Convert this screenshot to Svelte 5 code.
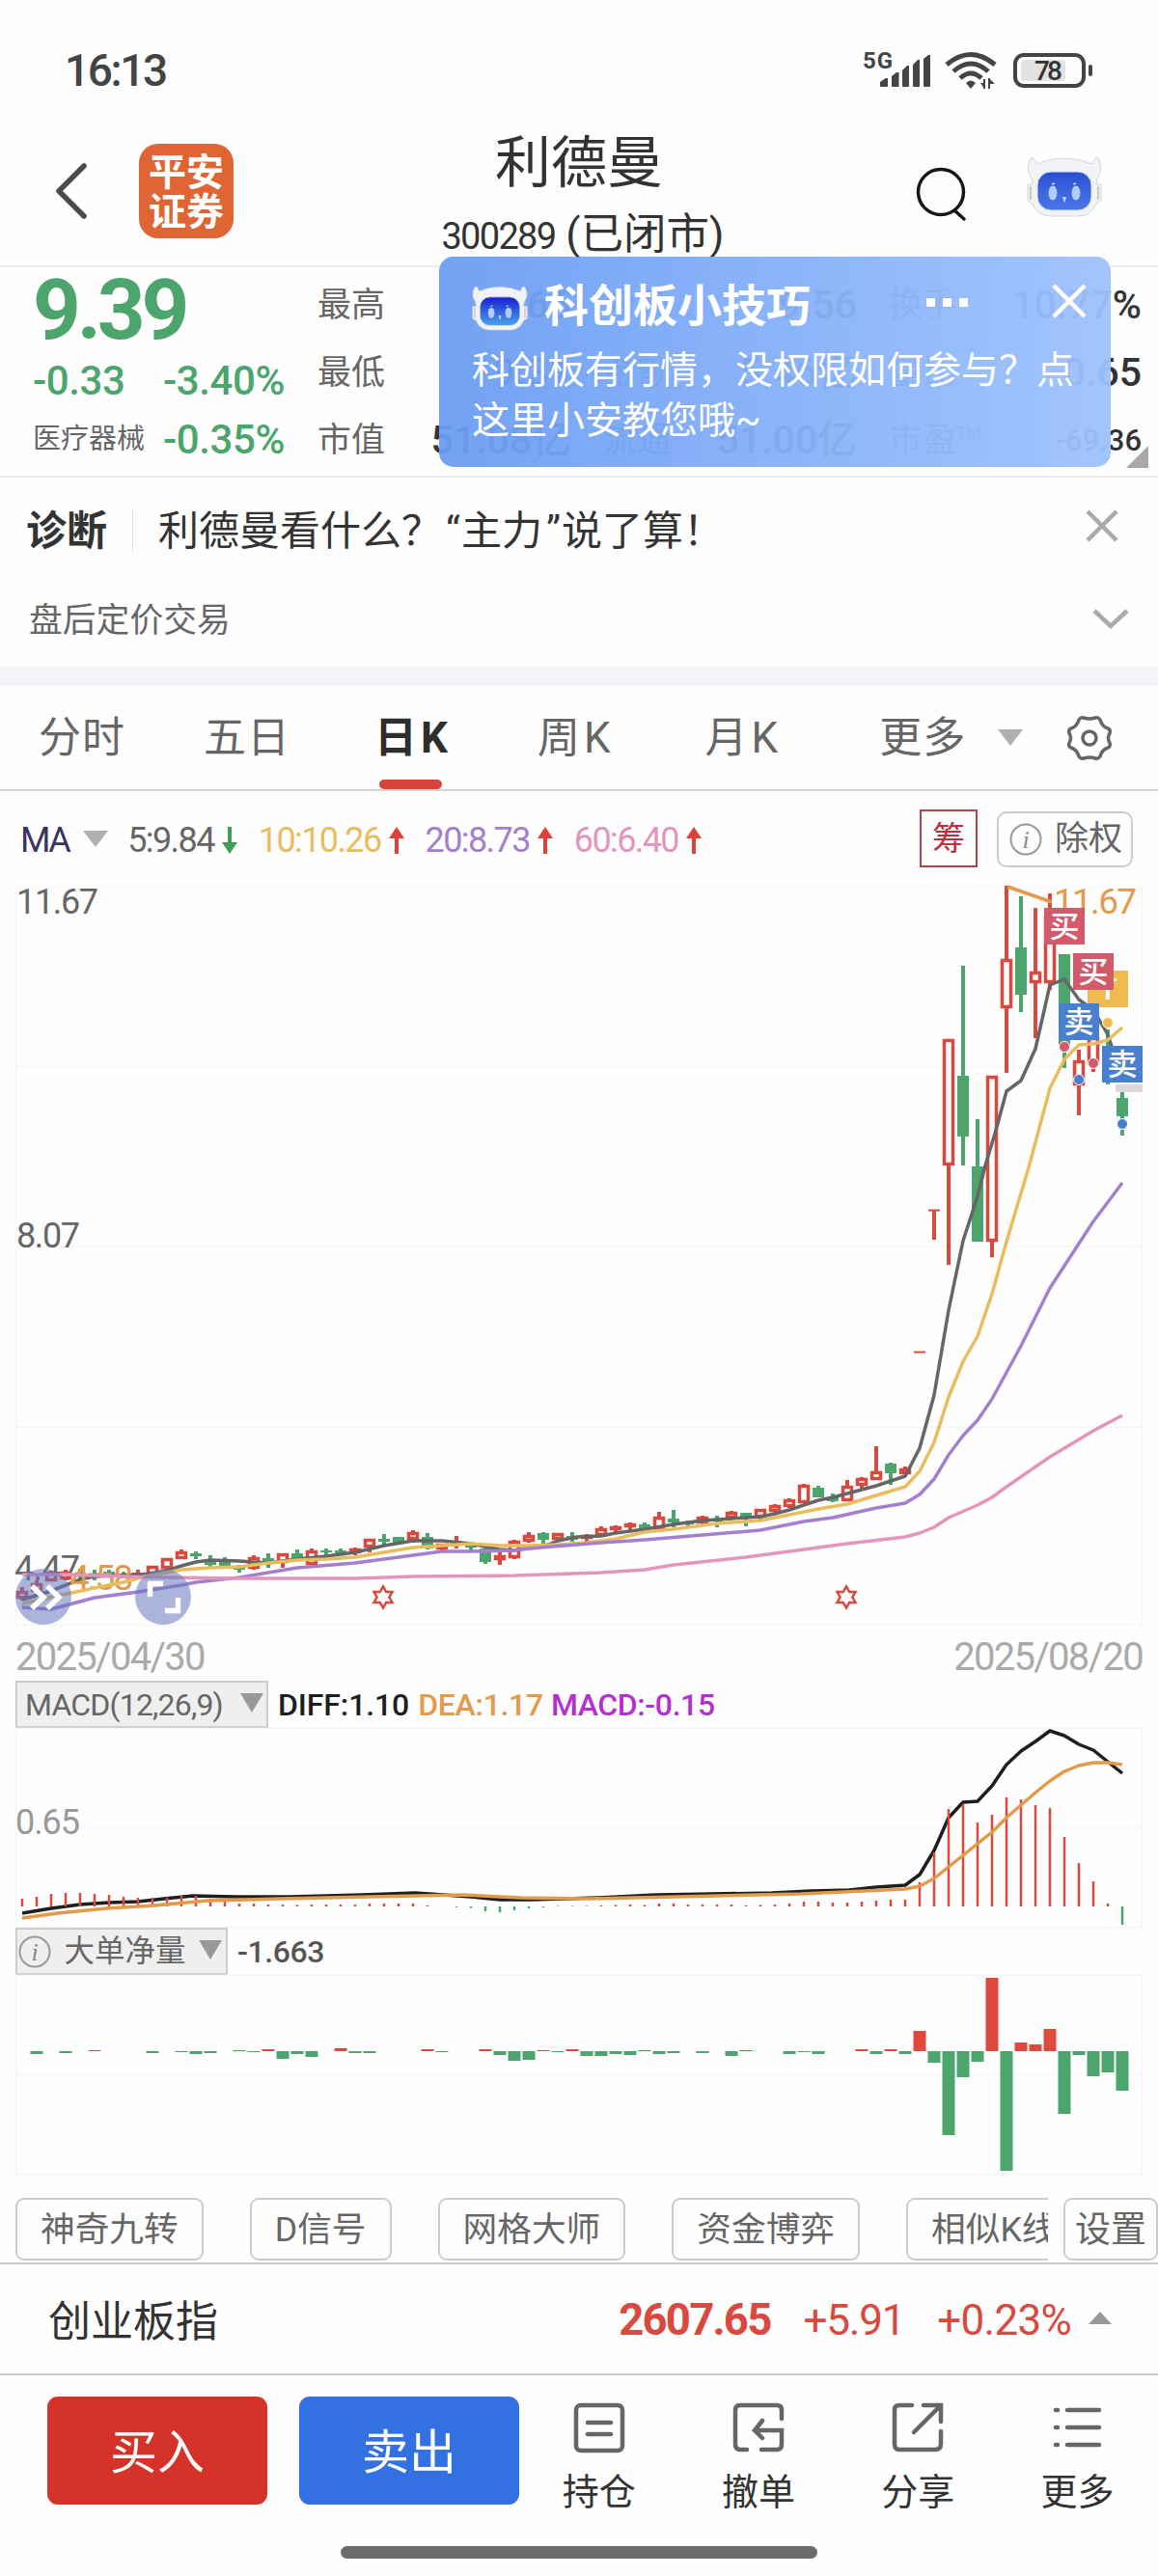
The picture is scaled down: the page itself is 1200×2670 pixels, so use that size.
<script lang="ts">
  type Candle = [kind: "r" | "g", top: number, bottom: number, high: number, low: number];

  const quotes = [
    ["最高", "9.66", "今开", "9.56", "换手", "10.77%"],
    ["最低", "9.31", "金额", "5.46亿", "量比", "0.65"],
    ["市值", "51.08亿", "流通", "51.00亿", "市盈", "-69.36"],
  ];
  const tabs = ["分时", "五日", "日K", "周K", "月K", "更多"];
  const averages = [
    { label: "5:9.84", tone: "ma5", up: false },
    { label: "10:10.26", tone: "ma10", up: true },
    { label: "20:8.73", tone: "ma20", up: true },
    { label: "60:6.40", tone: "ma60", up: true },
  ];
  const tools = ["神奇九转", "D信号", "网格大师", "资金博弈", "相似K线"];

  const step = 15;
  const x = (i: number) => 23 + i * step;

  // kind, body top, body bottom, wick high, wick low
  const candles: Candle[] = [
    ["r", 1649, 1657, 1645, 1659], ["r", 1641, 1650, 1638, 1650], ["r", 1630, 1639, 1628, 1639],
    ["r", 1629, 1637, 1627, 1638], ["g", 1630, 1632, 1626, 1637], ["g", 1631, 1632, 1627, 1638],
    ["g", 1629, 1632, 1627, 1635], ["g", 1631, 1633, 1629, 1636], ["r", 1630, 1632, 1627, 1635],
    ["r", 1623, 1632, 1623, 1634], ["r", 1615, 1626, 1615, 1628], ["r", 1608, 1616, 1606, 1616],
    ["g", 1610, 1613, 1608, 1616], ["g", 1616, 1622, 1612, 1624], ["g", 1619, 1623, 1614, 1626],
    ["g", 1625, 1627, 1622, 1630], ["r", 1614, 1626, 1612, 1627], ["g", 1615, 1620, 1610, 1625],
    ["r", 1610, 1620, 1610, 1625], ["g", 1610, 1615, 1606, 1615], ["r", 1607, 1622, 1605, 1623],
    ["g", 1607, 1609, 1605, 1612], ["g", 1607, 1611, 1605, 1612], ["r", 1605, 1610, 1604, 1612],
    ["r", 1595, 1604, 1595, 1609], ["g", 1595, 1598, 1590, 1602], ["g", 1593, 1599, 1593, 1599],
    ["r", 1588, 1596, 1586, 1599], ["g", 1593, 1605, 1589, 1606], ["r", 1600, 1606, 1600, 1607],
    ["r", 1597, 1599, 1592, 1605], ["g", 1602, 1604, 1600, 1607], ["g", 1605, 1619, 1603, 1621],
    ["r", 1612, 1617, 1609, 1622], ["r", 1597, 1615, 1596, 1616], ["r", 1591, 1598, 1588, 1599],
    ["g", 1589, 1596, 1588, 1600], ["r", 1589, 1596, 1589, 1597], ["g", 1592, 1596, 1588, 1598],
    ["r", 1591, 1594, 1590, 1598], ["r", 1584, 1592, 1582, 1592], ["r", 1582, 1586, 1581, 1588],
    ["r", 1579, 1583, 1578, 1586], ["g", 1580, 1586, 1578, 1588], ["r", 1572, 1587, 1567, 1587],
    ["g", 1574, 1578, 1565, 1583], ["g", 1578, 1580, 1576, 1583], ["r", 1572, 1579, 1571, 1580],
    ["g", 1575, 1577, 1571, 1583], ["r", 1567, 1574, 1566, 1575], ["g", 1568, 1574, 1568, 1582],
    ["r", 1564, 1573, 1564, 1577], ["r", 1560, 1567, 1559, 1568], ["r", 1554, 1562, 1553, 1563],
    ["r", 1539, 1558, 1538, 1558], ["g", 1542, 1552, 1540, 1552], ["g", 1552, 1556, 1548, 1557],
    ["r", 1540, 1556, 1534, 1556], ["r", 1532, 1540, 1531, 1543], ["r", 1525, 1534, 1499, 1534],
    ["g", 1517, 1527, 1516, 1539], ["r", 1522, 1528, 1520, 1528], ["r", 1401, 1402, 1401, 1402],
    ["r", 1254, 1255, 1254, 1285], ["r", 1077, 1208, 1077, 1311], ["g", 1115, 1178, 1001, 1208],
    ["g", 1209, 1287, 1160, 1287], ["r", 1115, 1287, 1115, 1303], ["r", 994, 1045, 918, 1112],
    ["g", 982, 1031, 929, 1049], ["r", 1007, 1019, 941, 1076], ["r", 950, 1019, 926, 1026],
    ["g", 989, 1083, 989, 1107], ["r", 1099, 1125, 1088, 1156], ["r", 1075, 1103, 1070, 1111],
    ["g", 1090, 1122, 1067, 1124], ["g", 1138, 1157, 1132, 1177],
  ];

  const ma5 = "23,1658 50,1650 68,1643 83,1637 98,1634 143,1632 158,1631 173,1628 188,1623 203,1619 218,1617 248,1618 278,1620 308,1616 338,1613 368,1609 398,1602 428,1597 458,1597 488,1600 503,1603 518,1606 533,1607 548,1604 568,1601 578,1597 598,1593 623,1592 638,1589 668,1585 698,1580 728,1576 758,1574 788,1572 803,1569 818,1565 833,1560 848,1555 863,1552 878,1548 893,1544 908,1540 923,1535 938,1530 953,1501 968,1446 983,1358 998,1286 1013,1240 1021,1208 1031,1175 1043,1131 1058,1120 1073,1087 1088,1021 1103,1015 1118,1036 1133,1047 1148,1072 1163,1120";
  const ma10 = "23,1662 60,1654 98,1646 128,1640 150,1634 188,1627 218,1625 248,1624 278,1620 308,1617 338,1616 368,1614 398,1609 428,1604 458,1602 488,1600 518,1602 548,1602 578,1601 608,1599 638,1595 668,1588 698,1585 743,1579 788,1576 818,1570 848,1564 878,1559 908,1550 938,1541 953,1525 968,1495 983,1448 998,1411 1013,1385 1028,1341 1043,1287 1066,1210 1088,1128 1103,1098 1118,1083 1133,1082 1148,1078 1163,1065";
  const ma20 = "23,1666 53,1668 68,1664 98,1656 143,1650 188,1643 203,1640 248,1635 308,1625 368,1620 428,1612 458,1608 488,1608 530,1607 560,1604 623,1599 668,1596 728,1591 788,1586 833,1577 863,1573 908,1563 938,1558 953,1549 968,1533 983,1508 998,1488 1013,1472 1028,1450 1058,1395 1088,1335 1133,1266 1163,1226";
  const ma60 = "23,1632 68,1632 128,1634 173,1635 248,1636 368,1636 428,1634 533,1633 563,1632 623,1630 668,1627 698,1622 773,1614 833,1606 878,1600 938,1593 953,1589 968,1583 983,1573 1013,1560 1028,1552 1043,1541 1088,1510 1133,1483 1163,1467";

  const tags = [
    { x: 1127, y: 1006, text: "T", tone: "both" },
    { x: 1082, y: 941, text: "买", tone: "buy" },
    { x: 1112, y: 988, text: "买", tone: "buy" },
    { x: 1097, y: 1040, text: "卖", tone: "sell" },
    { x: 1142, y: 1084, text: "卖", tone: "sell" },
  ];
  const dots = [
    { x: 1103, y: 1085, tone: "buy" },
    { x: 1118, y: 1119, tone: "sell" },
    { x: 1133, y: 1102, tone: "buy" },
    { x: 1148, y: 1060, tone: "both" },
    { x: 1163, y: 1165, tone: "sell" },
  ];

  const macd = [
    8, 10, 13, 14, 14, 13, 12, 10, 9, 9, 9, 11, 11, 8, 5, 3, 3, 2, 2, 1.5, 2, 2, 2, 2, 3, 3, 3, 3, 1, 0, -1, -1.5, -5,
    -6, -4, -2, -1, 0.5, 0.5, 0.5, 1, 1.5, 2, 1.5, 3, 3, 2, 2, 2, 2, 1, 1.5, 2, 3, 5, 5, 4, 4, 5, 6, 7, 7, 25, 56, 101,
    106, 87, 95, 113, 111, 105, 102, 72, 45, 26, 3, -19,
  ];
  const diff = "23,1983 53,1978 83,1974 113,1972 143,1971 170,1968 200,1965 245,1966 300,1966 375,1964 430,1962 460,1964 488,1966 518,1969 550,1969 620,1967 680,1964 800,1962 840,1960 880,1959 908,1956 938,1954 953,1943 968,1918 983,1884 998,1868 1013,1867 1028,1851 1043,1829 1058,1815 1073,1805 1088,1794 1103,1799 1118,1808 1133,1814 1148,1826 1163,1838";
  const dea = "23,1988 60,1983 110,1978 160,1975 215,1970 290,1968 430,1965 480,1964 540,1967 610,1968 700,1966 830,1963 938,1958 953,1955 968,1947 983,1935 998,1923 1013,1911 1028,1899 1043,1884 1058,1871 1073,1858 1088,1846 1103,1836 1118,1830 1133,1827 1148,1827 1163,1829";

  const net = [
    0, -3, 0, -2, 0, 1, 0, 0, 0, -2, 0, -1, -3, -2, 0, 1, -1, 2, -8, -3, -6, 0, 3, -2, -2, 0, 0, 0, 2, -1, 0, 0, 2, -4,
    -10, -9, 1, -1, 2, -5, -5, -3, -4, 1, -3, -2, 0, -2, 0, -5, 1, 0, 0, -3, -1, -3, 0, 0, 2, -3, 2, -3, 21, -12, -87,
    -27, -11, 76, -124, 9, 7, 23, -65, -4, -26, -22, -41,
  ];

  let active = $state("日K");
</script>

{#snippet robot(cls: string, face: string)}
  <svg class={cls} viewBox="0 0 78 62">
    <defs>
      <linearGradient id={face} x1="0" y1="0" x2="0" y2="1">
        <stop offset="0" stop-color={face === "deep" ? "#1a1fd0" : "#2b50d0"} />
        <stop offset="1" stop-color={face === "deep" ? "#4aa4ee" : "#4a78ea"} />
      </linearGradient>
    </defs>
    <g fill="#f1f3f7" stroke="#d4d6da" stroke-width="1">
      <path d="M4 2Q8 0 10 8Q38-4 68 8Q70 0 74 2Q80 14 73 23L72 29H77V46L72 49Q68 61 54 62H24Q10 61 6 49L1 46V29H6L5 23Q-2 14 4 2Z" />
    </g>
    <path d="M4 31V45M74 31V45" stroke="#d9c3c8" stroke-width="2" />
    <rect x="11" y="16" width="56" height="40" rx="14" fill="url(#{face})" stroke="#dfe6fb" stroke-width="1" />
    <ellipse cx="27" cy="38" rx="4.500" ry="7.500" fill="#b3cdf8" />
    <ellipse cx="51" cy="38" rx="4.500" ry="7.500" fill="#b3cdf8" />
    <path d="M26 29l3-1M48 29l3-1M38 43l1 3 1-3z" stroke="#c7dafb" stroke-width="1.5" fill="#c7dafb" />
  </svg>
{/snippet}

{#snippet info()}
  <svg class="info" viewBox="0 0 34 34">
    <circle cx="17" cy="17" r="15.5" fill="none" stroke="#999" stroke-width="2" />
    <text x="17" y="26" text-anchor="middle">i</text>
  </svg>
{/snippet}

<div class="screen">
  <div class="status">
    <span class="time">16:13</span>
    <svg class="signals" viewBox="0 0 240 44">
      <g fill="#444">
        <text class="net-type" x="0" y="21" textLength="31">5G</text>
        <path d="M18 39v-4l6-4h2v8q0 1-1 1h-6q-1 0-1-1zM30 39v-10l5-4h2.500v14q0 1-1 1h-5.500q-1 0-1-1zM41 39v-16l5-5h2v21q0 1-1 1h-5q-1 0-1-1zM52 39v-22l5-5h2v27q0 1-1 1h-5q-1 0-1-1zM63 39v-28l5-4h2v32q0 1-1 1h-5q-1 0-1-1z" />
        <path d="M107 36q5-5 10 0l-5 6zM122 36h4v6zM125 32h2v10h-2zM130 31h2v11h-2zM132 32l5 5h-5z" />
      </g>
      <g fill="none" stroke="#444" stroke-width="5">
        <path d="M87 17Q112-4 137 17M94 24Q112 8 130 24M101 31Q112 21 123 31" />
        <rect x="158" y="7" width="71" height="32" rx="9" stroke-width="4" />
        <path d="M236 19v8" stroke-linecap="round" stroke-width="4" />
      </g>
      <rect x="164" y="12" width="46" height="22" rx="4" fill="#e2e2e2" />
      <text class="level" x="178" y="33" textLength="29" fill="#333">78</text>
    </svg>
  </div>

  <header>
    <div class="side">
      <svg class="back" viewBox="0 0 34 60"><path d="M30 4L4 30L30 56" /></svg>
      <div class="logo"><span>平安</span><span>证券</span></div>
    </div>
    <div class="title">
      <h1>利德曼</h1>
      <p><span class="code">300289</span>(已闭市)</p>
    </div>
    <div class="side end">
      <svg class="search" viewBox="0 0 54 58">
        <circle cx="26" cy="27" r="23.500" /><path d="M40 46L50 55" />
      </svg>
      {@render robot("bot", "plain")}
    </div>
  </header>

  <section class="quote">
    <div class="price">
      <strong>9.39</strong>
      <div class="pair"><span>-0.33</span><span>-3.40%</span></div>
      <div class="pair"><em>医疗器械</em><span>-0.35%</span></div>
    </div>
    <div class="stats">
      {#each quotes as row, r}
        {#each row as cell, c}
          {#if c % 2}
            <b class:small={r === 2 && c === 5}>{cell}</b>
          {:else}
            <span>{cell}{#if cell === "市盈"}<sup>TM</sup>{/if}</span>
          {/if}
        {/each}
      {/each}
    </div>
    <i class="corner"></i>

    <div class="tip">
      <div class="tip-head">
        {@render robot("tip-bot", "deep")}
        <h2>科创板小技巧</h2>
        <svg class="more" viewBox="0 0 44 10"><path d="M0 0h9v9H0zM17 0h9v9h-9zM34 0h9v9h-9z" fill="#fff" /></svg>
        <svg class="close" viewBox="0 0 36 36"><path d="M2 2L34 34M34 2L2 34" /></svg>
      </div>
      <p>科创板有行情，没权限如何参与？点<br />这里小安教您哦~</p>
    </div>
  </section>

  <section class="notice">
    <div class="diagnose">
      <strong>诊断</strong>
      <span>利德曼看什么？<q>“</q>主力<q>”</q>说了算！</span>
      <svg viewBox="0 0 34 34"><path d="M2 2L32 32M32 2L2 32" /></svg>
    </div>
    <div class="after">
      <span>盘后定价交易</span>
      <svg viewBox="0 0 38 22"><path d="M2 2L19 18L36 2" /></svg>
    </div>
  </section>

  <nav>
    {#each tabs as tab}
      <button class:active={active === tab} onclick={() => (active = tab)}>{tab}</button>
    {/each}
    <i class="down"></i>
    <svg class="gear" viewBox="0 0 48 48">
      <path d="M18 3Q24 5 30 3Q33 2 35 5Q37 12 43 14Q46 15 45 19Q42 24 45 29Q46 33 43 34Q37 36 35 43Q33 46 30 45Q24 43 18 45Q15 46 13 43Q11 36 5 34Q2 33 3 29Q6 24 3 19Q2 15 5 14Q11 12 13 5Q15 2 18 3Z" />
      <circle cx="24" cy="24" r="7" />
    </svg>
  </nav>

  <div class="averages">
    <span class="ma">MA</span><i class="down"></i>
    {#each averages as avg}
      <span class={avg.tone}>{avg.label}</span>
      <svg class="arrow" class:up={avg.up} viewBox="0 0 16 28"><path d="M8 0V20" /><path d="M0 16H16L8 28Z" /></svg>
    {/each}
    <button class="chip-dist">筹</button>
    <button class="rights">{@render info()}除权</button>
  </div>

  <svg class="kline" viewBox="0 918 1200 770">
    <path class="grid" d="M16.500 918.500H1183.500V1684.500H16.500ZM16.500 1105.500H1183.500M16.500 1292.500H1183.500M16.500 1479.500H1183.500" />
    <g class="axis">
      <text x="17" y="947" textLength="85">11.67</text>
      <text x="17" y="1293" textLength="66">8.07</text>
      <text x="15" y="1638" textLength="68">4.47</text>
    </g>
    {#each candles as [kind, top, bottom, high, low], i}
      <g class={kind}>
        {#if high < top}<path d="M{x(i)} {high}V{top}" />{/if}
        {#if low > bottom}<path d="M{x(i)} {bottom}V{low}" />{/if}
        {#if bottom - top < 3}
          <path class="flat" d="M{x(i) - 6} {(top + bottom) / 2}h12" />
        {:else if kind === "r"}
          <rect x={x(i) - 4.5} y={top + 1.5} width="9" height={Math.max(bottom - top - 3, 1)} />
        {:else}
          <rect x={x(i) - 6} y={top} width="12" height={bottom - top} />
        {/if}
      </g>
    {/each}
    <polyline class="line ma5" points={ma5} />
    <text class="mark" x="72" y="1648" textLength="66">4.58</text>
    <polyline class="line ma10" points={ma10} />
    <polyline class="line ma20" points={ma20} />
    <polyline class="line ma60" points={ma60} />
    <path class="pointer" d="M1044 919L1090 935" />
    <text class="mark" x="1092" y="947" textLength="86">11.67</text>
    <rect x="1156" y="1124" width="28" height="8" fill="#d9d9d9" />
    {#each tags as tag}
      <g class="tag {tag.tone}">
        <rect x={tag.x} y={tag.y} width="42" height="38" />
        <text x={tag.x + 21} y={tag.y + 30} text-anchor="middle">{tag.text}</text>
      </g>
    {/each}
    {#each dots as dot}
      <circle class="dot {dot.tone}" cx={dot.x} cy={dot.y} r="5.500" />
    {/each}
    {#each [397, 877] as sx}
      <path class="star" transform="translate({sx} 1655.500)" d="M0-11L3.200-5.500H9.500L6.400 0L9.500 5.500H3.200L0 11L-3.200 5.500H-9.500L-6.400 0L-9.500-5.500H-3.200Z" />
    {/each}
    <circle class="fab" cx="45" cy="1655" r="29" />
    <circle class="fab" cx="169" cy="1655" r="29" />
    <path class="fab-icon" d="M33 1644L45 1655.500L33 1667M49 1644L61 1655.500L49 1667M155.500 1655V1641.500H169M184.500 1656V1669.500H171" />
  </svg>

  <div class="dates"><span>2025/04/30</span><span>2025/08/20</span></div>

  <div class="readout">
    <button class="picker macd-pick"><span>MACD(12,26,9)</span><i class="down"></i></button>
    <span class="diff">DIFF:1.10</span><span class="dea">DEA:1.17</span><span class="macd">MACD:-0.15</span>
  </div>
  <svg class="sub" viewBox="0 1791 1200 207">
    <path class="grid" d="M16.500 1791.500H1183.500V1997.500H16.500ZM16.500 1894.500H1183.500" />
    <text class="scale" x="16" y="1901" textLength="67">0.65</text>
    <polyline class="line diff" points={diff} />
    {#each macd as h, i}
      <path class={h < 0 ? "bar-g" : "bar-r"} d="M{x(i)} 1976v{-h}" />
    {/each}
    <polyline class="line dea" points={dea} />
  </svg>

  <div class="readout">
    <button class="picker net-pick">{@render info()}<span>大单净量</span><i class="down"></i></button>
    <span class="net">-1.663</span>
  </div>
  <svg class="sub" viewBox="0 2047 1200 207">
    <path class="grid" d="M16.500 2047.500H1183.500V2253.500H16.500ZM16.500 2150.500H1183.500" />
    {#each net as h, i}
      {#if h}
        <rect x={x(i) - 6.5} y={h > 0 ? 2126 - h : 2126} width="13" height={Math.abs(h)} fill={h > 0 ? "#de483d" : "#4ba56c"} />
      {/if}
    {/each}
  </svg>

  <div class="tools">
    <div class="scroller">
      {#each tools as tool}<button>{tool}</button>{/each}
    </div>
    <button class="settings">设置</button>
  </div>

  <div class="index">
    <span class="name">创业板指</span>
    <strong>2607.65</strong><span>+5.91</span><span class="pct">+0.23%</span>
    <i></i>
  </div>

  <footer>
    <button class="trade buy">买入</button>
    <button class="trade sell">卖出</button>
    <div class="actions">
      <button>
        <svg viewBox="0 0 54 54"><rect x="3" y="3" width="48" height="47" rx="5" /><path d="M15 21H39M15 33H39" /></svg>
        持仓
      </button>
      <button>
        <svg viewBox="0 0 54 54"><path d="M51 17V8Q51 3 46 3H8Q3 3 3 8V43Q3 49 8 49H15M30 49H46Q51 49 51 44V29H24M31 19L23 29L31 37" /></svg>
        撤单
      </button>
      <button>
        <svg viewBox="0 0 54 54"><path d="M21 3H8Q3 3 3 8V43Q3 49 8 49H45Q51 49 51 43V30M33 3H51V20M50 4L23 31" /></svg>
        分享
      </button>
      <button>
        <svg viewBox="0 0 54 54"><path d="M4 8H6M16 8H49M4 26H6M16 26H49M4 44H6M16 44H49" /></svg>
        更多
      </button>
    </div>
  </footer>
  <div class="home"></div>
</div>

<style>
  :global(body) {
    background: #fefefe;
  }
  .screen {
    width: 1200px;
    height: 2670px;
    overflow: hidden;
    background: #fefefe;
    color: #333;
    font-family: Roboto, "Noto Sans CJK SC", sans-serif;
    line-height: 1;
  }
  .screen * {
    box-sizing: border-box;
  }
  h1,
  h2,
  p {
    margin: 0;
    font-weight: 400;
  }
  button {
    padding: 0;
    border: none;
    background: none;
    color: inherit;
    font: inherit;
    line-height: 1;
    white-space: nowrap;
  }
  svg {
    display: block;
    flex: none;
    overflow: visible;
  }
  .status {
    display: flex;
    justify-content: space-between;
    height: 130px;
    padding: 50px 66px 0 67px;
  }
  .time {
    font-size: 46px;
    font-weight: 500;
    letter-spacing: -2.4px;
    color: #444;
  }
  .signals {
    width: 240px;
    height: 44px;
  }
  .net-type {
    font-size: 24px;
    font-weight: 700;
  }
  .level {
    font-size: 28px;
    font-weight: 500;
  }

  header {
    display: grid;
    grid-template-columns: 1fr auto 1fr;
    height: 145px;
    padding: 0 58px;
  }
  .side {
    display: flex;
    align-items: center;
    padding-bottom: 9px;
  }
  .end {
    justify-content: flex-end;
  }
  .back {
    width: 34px;
    height: 60px;
    margin: 0 52px 0 -1px;
    fill: none;
    stroke: #4a4a4a;
    stroke-width: 5.5;
    stroke-linecap: round;
    stroke-linejoin: round;
  }
  .logo {
    display: grid;
    gap: 2px;
    place-content: center;
    width: 98px;
    height: 98px;
    margin-left: 1px;
    padding-top: 4px;
    border-radius: 20px;
    background: #df6534;
    color: #fff;
    font-size: 39px;
    font-weight: 700;
  }
  .title {
    text-align: center;
  }
  h1 {
    margin: 10px 0 15px;
    font-size: 58px;
    line-height: 58px;
  }
  .title p {
    padding-left: 8px;
    font-size: 44.5px;
    line-height: 60px;
  }
  .code {
    margin-right: 11px;
    font-size: 38px;
    letter-spacing: -1.7px;
  }
  .search {
    width: 54px;
    height: 58px;
    margin: 6px 61px 0 0;
    fill: none;
    stroke: #161616;
    stroke-width: 3.5;
    stroke-linecap: round;
  }
  .bot {
    width: 78px;
    height: 62px;
    margin-bottom: 11px;
  }

  .quote {
    position: relative;
    display: flex;
    height: 220px;
    padding: 0 17px 0 34px;
    border-top: 2px solid #ececec;
    border-bottom: 2px solid #ececec;
  }
  .price {
    display: flex;
    flex-direction: column;
    width: 295px;
    color: #4ba56c;
  }
  .price strong {
    margin-top: 1px;
    font-size: 87px;
    letter-spacing: -4.2px;
    line-height: 86px;
  }
  .pair {
    display: flex;
    align-items: center;
    justify-content: space-between;
    width: 261px;
    height: 61px;
    font-size: 42px;
    font-weight: 500;
    letter-spacing: -0.4px;
  }
  .pair em {
    color: #666;
    font-size: 29px;
    font-style: normal;
    font-weight: 400;
    letter-spacing: 0;
  }
  .stats {
    flex: 1;
    display: grid;
    grid-template-columns: 98px 198px 98px 198px 98px 1fr;
    grid-template-rows: repeat(3, 70px);
    align-items: center;
    padding-top: 4px;
    color: #666;
    font-size: 35px;
    white-space: nowrap;
  }
  .stats b {
    padding-right: 33px;
    color: #333;
    font-size: 41px;
    font-weight: 500;
    text-align: right;
  }
  .stats b:nth-child(6n) {
    padding-right: 0;
  }
  .stats .small {
    font-size: 31px;
  }
  sup {
    font-size: 18px;
  }
  .corner {
    position: absolute;
    right: 10px;
    bottom: 8px;
    border-left: 23px solid transparent;
    border-bottom: 23px solid #a9a9a9;
  }
  .tip {
    position: absolute;
    left: 455px;
    top: -11px;
    width: 696px;
    height: 218px;
    padding: 27px 25px 0 34px;
    border-radius: 15px;
    background: linear-gradient(90deg, rgba(107, 157, 243, 0.95), rgba(158, 194, 254, 0.95));
    color: #fff;
  }
  .tip-head {
    display: flex;
    align-items: center;
    height: 48px;
  }
  .tip-bot {
    width: 58px;
    height: 46px;
    margin-top: 4px;
  }
  h2 {
    margin: 0 116px 0 17px;
    font-size: 46px;
    font-weight: 700;
  }
  .more {
    width: 44px;
    height: 10px;
    margin: -6px 86px 0 4px;
  }
  .close {
    width: 36px;
    height: 36px;
    margin-top: -10px;
    stroke: #fff;
    stroke-width: 4.5;
  }
  .tip p {
    margin-top: 17px;
    font-size: 39px;
    line-height: 52px;
    white-space: nowrap;
  }

  .notice {
    height: 216px;
    padding: 20px 28px 0 27px;
    border-bottom: 20px solid #f3f5f8;
  }
  .diagnose,
  .after {
    display: flex;
    align-items: center;
    justify-content: space-between;
  }
  .diagnose {
    height: 72px;
    padding-right: 13px;
    font-size: 42px;
  }
  .diagnose strong {
    padding-right: 26px;
    border-right: 1px solid #ddd;
  }
  .diagnose span {
    flex: 1;
    padding-left: 26px;
  }
  q {
    display: inline-block;
    padding: 0 1px 0 4px;
    quotes: none;
  }
  .diagnose svg {
    width: 34px;
    height: 34px;
    margin-top: -12px;
  }
  .notice svg {
    fill: none;
    stroke: #aaa;
    stroke-width: 4.5;
  }
  .after {
    height: 113px;
    padding-left: 3px;
    color: #666;
    font-size: 34.8px;
  }
  .after svg {
    width: 38px;
    height: 22px;
    margin: -4px 2px 0 0;
  }

  nav {
    display: flex;
    align-items: center;
    height: 109px;
    padding-left: 40px;
    border-bottom: 2px solid #d4d4d4;
    color: #666;
    font-size: 44px;
  }
  nav button {
    position: relative;
    height: 107px;
    letter-spacing: 1px;
  }
  nav button:nth-child(n + 2) {
    margin-left: 81px;
  }
  nav button:nth-child(3) {
    margin-left: 87px;
    letter-spacing: 4px;
  }
  nav button:nth-child(4) {
    margin-left: 89px;
    letter-spacing: 4px;
  }
  nav button:nth-child(5) {
    margin-left: 94px;
    letter-spacing: 4px;
  }
  nav button:nth-child(6) {
    margin-left: 101px;
  }
  .active {
    color: #2e2e2e;
    font-weight: 700;
  }
  .active::after {
    content: "";
    position: absolute;
    left: 5px;
    bottom: 0;
    width: 65px;
    height: 10px;
    border-radius: 5px;
    background: #d6453c;
  }
  .down {
    border: 13px solid transparent;
    border-top: 17px solid #b0b0b0;
    border-bottom: none;
  }
  nav .down {
    margin-left: 33px;
  }
  .gear {
    width: 48px;
    height: 48px;
    margin-left: 45px;
    fill: none;
    stroke: #666;
    stroke-width: 3.5;
  }

  .averages {
    display: flex;
    align-items: center;
    height: 98px;
    padding: 3px 26px 0 21px;
    font-size: 36px;
    letter-spacing: -1.6px;
  }
  .ma {
    color: #3a3560;
    letter-spacing: -2.5px;
  }
  .averages .down {
    margin: -3px 20px 0 15px;
  }
  .arrow {
    width: 16px;
    height: 28px;
    margin: 0 22px 0 8px;
    fill: #3f9f55;
    stroke: #3f9f55;
    stroke-width: 4;
  }
  .arrow path:last-child {
    stroke: none;
  }
  .up {
    transform: scaleY(-1);
    fill: #dc4238;
    stroke: #dc4238;
  }
  .ma5 {
    color: #666;
    stroke: #666;
  }
  .ma10 {
    color: #e8bd60;
    stroke: #e8bd60;
  }
  .ma20 {
    color: #a47fcf;
    stroke: #a47fcf;
  }
  .ma60 {
    color: #e495bd;
    stroke: #e495bd;
  }
  .chip-dist {
    width: 60px;
    height: 60px;
    margin: -3px 0 0 auto;
    border: 2px solid #b0454f;
    color: #b8323c;
    font-size: 34px;
  }
  .rights {
    display: flex;
    align-items: center;
    gap: 13px;
    height: 58px;
    width: 141px;
    margin: -2px 0 0 20px;
    padding-left: 11px;
    border: 2px solid #ccc;
    border-radius: 10px;
    color: #666;
    font-size: 35px;
    letter-spacing: 0;
  }
  .info {
    width: 34px;
    height: 34px;
  }
  .info text {
    fill: #888;
    font: italic 26px "Liberation Serif", serif;
  }

  .kline {
    width: 1200px;
    height: 770px;
  }
  .sub {
    width: 1200px;
    height: 207px;
  }
  .grid {
    fill: none;
    stroke: #f5f5f5;
    stroke-width: 1.5;
  }
  .axis {
    fill: #666;
    font-size: 36px;
  }
  .mark {
    fill: #e39a4a;
    font-size: 37px;
  }
  .r path {
    stroke: #d9493f;
    stroke-width: 4;
  }
  .g path {
    stroke: #4ba56c;
    stroke-width: 4;
  }
  .r .flat,
  .g .flat {
    stroke-width: 2;
  }
  .r rect {
    fill: #fefefe;
    stroke: #d9493f;
    stroke-width: 3.5;
  }
  .g rect {
    fill: #4ba56c;
  }
  .line {
    fill: none;
    stroke-width: 3.5;
    stroke-linejoin: round;
  }
  .pointer {
    stroke: #e39a4a;
    stroke-width: 3.5;
  }
  .tag text {
    fill: #fff;
    font-size: 31px;
    font-weight: 500;
  }
  .tag.buy,
  .dot.buy {
    fill: #d25a6a;
  }
  .tag.sell,
  .dot.sell {
    fill: #4880cf;
  }
  .tag.both,
  .dot.both {
    fill: #f0bb4e;
  }
  .dot {
    stroke: #fff;
    stroke-width: 1;
  }
  .star {
    fill: none;
    stroke: #d9493f;
    stroke-width: 2.5;
  }
  .fab {
    fill: rgba(99, 119, 190, 0.54);
  }
  .fab-icon {
    fill: none;
    stroke: #fff;
    stroke-width: 5.5;
  }

  .dates {
    display: flex;
    justify-content: space-between;
    height: 54px;
    padding: 10px 16px 0 16px;
    color: #aaa;
    font-size: 40px;
    letter-spacing: -1.7px;
  }
  .readout {
    display: flex;
    align-items: center;
    height: 49px;
    padding-left: 16px;
    font-size: 32px;
    font-weight: 500;
  }
  .picker {
    display: flex;
    align-items: center;
    height: 49px;
    border: 2px solid #ccc;
    background: #efefef;
    color: #666;
    font-weight: 400;
  }
  .picker .down {
    margin-top: -3px;
    border-width: 20px 12px 0;
    border-top-color: #999;
  }
  .macd-pick {
    justify-content: space-between;
    width: 262px;
    margin-right: 10px;
    padding: 0 3px 0 8px;
    letter-spacing: -0.8px;
  }
  .net-pick {
    justify-content: space-between;
    width: 220px;
    margin-right: 10px;
    padding: 0 4px 0 1px;
  }
  .net-pick span {
    font-size: 31.5px;
  }
  .net {
    color: #555;
    letter-spacing: -0.4px;
  }
  .diff {
    color: #1e1e1e;
    stroke: #1e1e1e;
    letter-spacing: -0.1px;
  }
  .dea {
    color: #e39a4a;
    stroke: #e39a4a;
  }
  span.dea {
    margin: 0 8px 0 9px;
    letter-spacing: -0.3px;
  }
  .macd {
    color: #b32fd0;
    letter-spacing: -0.4px;
  }
  span {
    stroke: none;
  }
  .scale {
    fill: #999;
    font-size: 36px;
  }
  .bar-r {
    stroke: #d9493f;
    stroke-width: 2.5;
  }
  .bar-g {
    stroke: #4ba56c;
    stroke-width: 2.5;
  }

  .tools {
    display: flex;
    justify-content: space-between;
    height: 93px;
    padding: 24px 0 0 16px;
    border-bottom: 2px solid #ccc;
  }
  .scroller {
    display: flex;
    gap: 48px;
    width: 1070px;
    overflow: hidden;
  }
  .tools button {
    flex: none;
    height: 65px;
    padding: 2px 24px 0;
    border: 2px solid #ccc;
    border-radius: 9px;
    color: #666;
    font-size: 35.7px;
  }
  .tools .settings {
    width: 98px;
    padding: 2px 0 0;
    font-size: 37px;
  }
  .index {
    display: flex;
    align-items: center;
    height: 115px;
    padding: 2px 48px 0 50px;
    border-bottom: 2px solid #ccc;
    color: #d9493f;
    font-size: 44px;
    letter-spacing: -1.2px;
  }
  .index .name {
    flex: 1;
    padding-top: 4px;
    color: #333;
    font-size: 44px;
    letter-spacing: 0;
  }
  .index strong {
    margin-right: 34px;
    font-size: 45.5px;
    letter-spacing: -1.8px;
  }
  .pct {
    margin-left: 34px;
    letter-spacing: -0.7px;
  }
  .index i {
    margin: -4px 0 0 18px;
    border: 12px solid transparent;
    border-top: none;
    border-bottom: 13px solid #999;
  }

  footer {
    display: flex;
    height: 177px;
    padding: 22px 0 0 49px;
  }
  .trade {
    width: 228px;
    height: 112px;
    margin-right: 33px;
    padding-top: 4px;
    border-radius: 11px;
    color: #fff;
    font-size: 49px;
  }
  .trade.buy {
    background: #d5332a;
  }
  .trade.sell {
    margin-right: 0;
    background: #3370e2;
  }
  .actions {
    flex: 1;
    display: grid;
    grid-template-columns: repeat(4, 165.3px);
    font-size: 38px;
  }
  .actions button {
    display: flex;
    flex-direction: column;
    align-items: center;
    gap: 20px;
    padding-top: 6px;
  }
  .actions svg {
    width: 54px;
    height: 54px;
    fill: none;
    stroke: #666;
    stroke-width: 4.5;
    stroke-linecap: round;
  }
  .home {
    width: 494px;
    height: 13px;
    margin: 0 auto;
    border-radius: 7px;
    background: #6b6b6b;
  }
</style>
